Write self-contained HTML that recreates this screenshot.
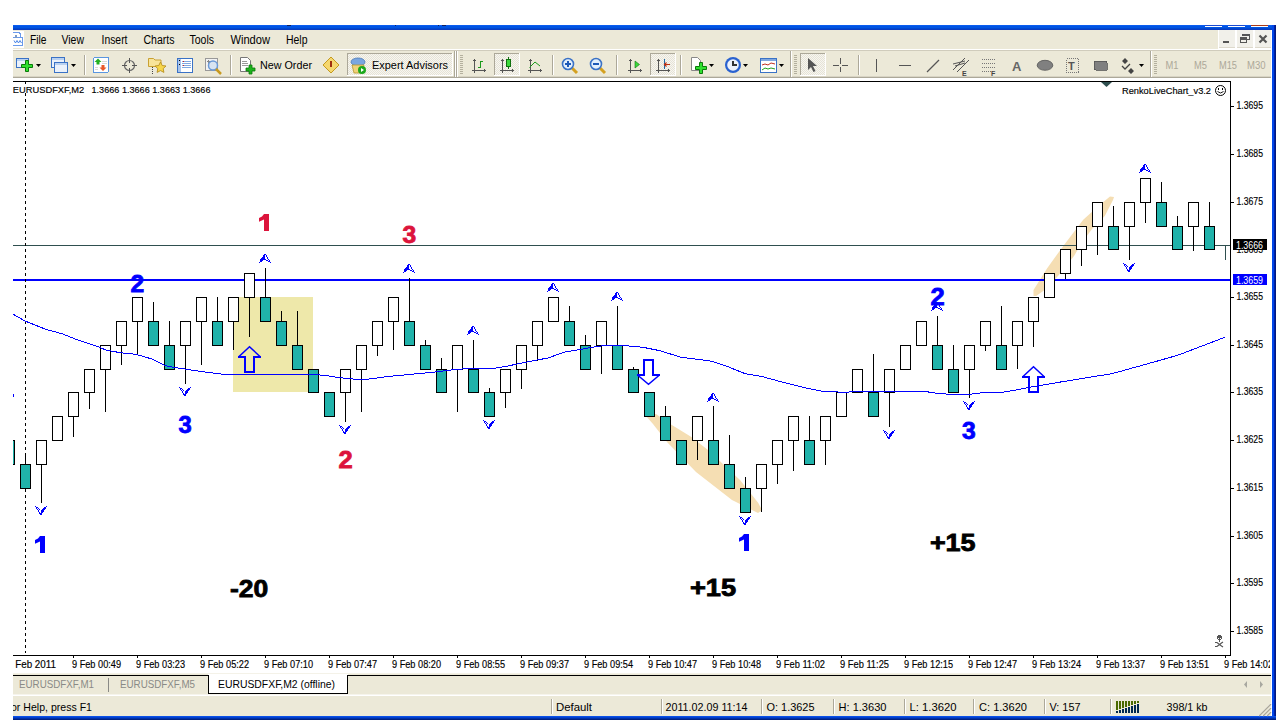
<!DOCTYPE html><html><head><meta charset="utf-8"><style>
html,body{margin:0;padding:0;background:#fff;width:1276px;height:720px;overflow:hidden}
svg{display:block}
text{font-family:"Liberation Sans", sans-serif} .ct{fill:#000;stroke:#000;stroke-width:0.15}
</style></head><body>
<svg width="1276" height="720" viewBox="0 0 1276 720" shape-rendering="crispEdges">
<rect x="0" y="0" width="1276" height="720" fill="#fff"/>

<rect x="13" y="25" width="1263" height="5" fill="#0054E3"/><rect x="13" y="25" width="1263" height="1" fill="#0A5CF0"/><rect x="13" y="28" width="1263" height="1" fill="#0048D0"/><rect x="13" y="29" width="1263" height="1" fill="#0A3CC0"/>
<rect x="287" y="25" width="4" height="1" fill="#102060"/><rect x="395" y="25" width="1" height="1" fill="#102060"/><rect x="438" y="25" width="1" height="1" fill="#102060"/><rect x="442" y="25" width="4" height="1" fill="#102060"/>
<rect x="1205" y="25" width="17" height="1" fill="#1A4AD0"/><rect x="1228" y="25" width="17" height="1" fill="#1A4AD0"/><rect x="1251" y="25" width="17" height="1" fill="#A83A18"/>
<rect x="1205" y="26" width="17" height="1" fill="#fff"/><rect x="1228" y="26" width="17" height="1" fill="#fff"/><rect x="1251" y="26" width="17" height="1" fill="#fff"/>
<rect x="1272" y="25" width="4" height="695" fill="#0046E8"/><rect x="1274" y="25" width="2" height="695" fill="#0020A8"/><rect x="1275" y="25" width="1" height="695" fill="#001A80"/>
<rect x="13" y="30" width="1258" height="20" fill="#ECE9D8"/>
<rect x="13" y="49" width="1258" height="1" fill="#fff"/>
<rect x="13" y="50" width="1258" height="1" fill="#D0CCBC"/>
<rect x="13" y="31" width="11" height="17" fill="#fff"/><path d="M13,32.5 h6 l1.5,1.5 v3.5 M13,37.5 h9.5 v7.5 h-9.5" stroke="#6A9AEA" stroke-width="1" fill="none"/><path d="M14,40.5 l1.5,2.5 l1.5,-2.5 l1.5,2.5 l1.5,-2.5 l1.5,2.5" stroke="#4A86E8" stroke-width="1" fill="none" shape-rendering="auto"/><rect x="15" y="35" width="2" height="3" fill="#7A9AC8"/>
<text x="30" y="44" font-size="12" fill="#000" textLength="16.5" lengthAdjust="spacingAndGlyphs">File</text>
<text x="61.5" y="44" font-size="12" fill="#000" textLength="22.5" lengthAdjust="spacingAndGlyphs">View</text>
<text x="101.5" y="44" font-size="12" fill="#000" textLength="26" lengthAdjust="spacingAndGlyphs">Insert</text>
<text x="143.5" y="44" font-size="12" fill="#000" textLength="31" lengthAdjust="spacingAndGlyphs">Charts</text>
<text x="189.5" y="44" font-size="12" fill="#000" textLength="24.5" lengthAdjust="spacingAndGlyphs">Tools</text>
<text x="230.5" y="44" font-size="12" fill="#000" textLength="39.5" lengthAdjust="spacingAndGlyphs">Window</text>
<text x="286" y="44" font-size="12" fill="#000" textLength="21.5" lengthAdjust="spacingAndGlyphs">Help</text>
<rect x="1218" y="30" width="53" height="19" fill="#fff"/>
<rect x="1219" y="30" width="16" height="18" fill="#F1F0EA"/><rect x="1219" y="47" width="16" height="1" fill="#DDD9CC"/>
<rect x="1237" y="30" width="16" height="18" fill="#F1F0EA"/><rect x="1237" y="47" width="16" height="1" fill="#DDD9CC"/>
<rect x="1255" y="30" width="16" height="18" fill="#F1F0EA"/><rect x="1255" y="47" width="16" height="1" fill="#DDD9CC"/>
<rect x="1223" y="41" width="6" height="2" fill="#555"/>
<path d="M1240.5,39.5 h6 v3 h-6 z M1243,36 v-1.5 h6 v5 h-2" stroke="#555" stroke-width="1" fill="none"/><rect x="1240" y="37" width="7" height="2" fill="#555"/><rect x="1242" y="34" width="7" height="2" fill="#555"/>
<path d="M1259.5,35.5 l7,7 M1266.5,35.5 l-7,7" stroke="#555" stroke-width="2.2" shape-rendering="auto"/>
<rect x="13" y="51" width="1258" height="27" fill="#ECE9D8"/>
<rect x="13" y="77" width="1258" height="1" fill="#ACA899"/><rect x="13" y="76" width="1258" height="1" fill="#D8D4C4"/>
<rect x="13" y="78" width="1258" height="3" fill="#fff"/>
<defs><pattern id="chk" x="0" y="0" width="2" height="2" patternUnits="userSpaceOnUse"><rect width="2" height="2" fill="#F7F6F1"/><rect width="1" height="1" fill="#E6E3D6"/><rect x="1" y="1" width="1" height="1" fill="#E6E3D6"/></pattern></defs>
<rect x="16.5" y="58.5" width="12" height="9" fill="#EAF1FB" stroke="#3A72C6"/><rect x="17" y="59" width="11" height="2" fill="#B9D1F0"/>
<path d="M21.5,64.5 h4 v-4 h3 v4 h4 v3 h-4 v4 h-3 v-4 h-4 z" fill="#2FE02F" stroke="#0A7A0A" stroke-width="1" shape-rendering="auto"/>
<path d="M36,64 h5 l-2.5,3 z" fill="#000" shape-rendering="auto"/>
<rect x="51.5" y="57.5" width="13" height="10" fill="#EAF1FB" stroke="#3A72C6"/><rect x="52" y="58" width="12" height="2" fill="#B9D1F0"/>
<rect x="54.5" y="62.5" width="13" height="10" fill="#EAF1FB" stroke="#3A72C6"/><rect x="55" y="63" width="12" height="2" fill="#B9D1F0"/>
<path d="M71,64 h5 l-2.5,3 z" fill="#000" shape-rendering="auto"/>
<rect x="84" y="55" width="1" height="20" fill="#ACA899"/><rect x="85" y="55" width="1" height="20" fill="#fff"/>
<rect x="93.5" y="57.5" width="15" height="15" rx="1.5" fill="#fff" stroke="#5A96E0"/><path d="M102,61 h5 M102,63 h5 M95,67 h3 M95,69 h3" stroke="#D8D8D8"/><path d="M98,58.5 l3.5,3.5 h-2 v2.5 h-3 v-2.5 h-2z" fill="#22B022" shape-rendering="auto"/><path d="M101.5,65 h3 v2.5 h2 l-3.5,3.5 l-3.5,-3.5 h2z" fill="#E8582A" shape-rendering="auto"/>
<circle cx="129.5" cy="65.5" r="5" fill="none" stroke="#666" stroke-width="1.2" shape-rendering="auto"/><path d="M129.5,58 v5 M129.5,68 v5 M122,65.5 h5 M132,65.5 h5" stroke="#555" stroke-width="1.2"/>
<path d="M148.5,58.5 h5 l1.5,1.5 h6 v6.5 h-12.5 z" fill="#F8E49A" stroke="#C9A133" stroke-width="1" shape-rendering="auto"/><path d="M152.5,67 v7" stroke="#444" stroke-dasharray="1,1"/><path d="M160.5,62 l1.7,3.5 l3.8,.5 l-2.8,2.6 l.7,3.8 l-3.4,-1.8 l-3.4,1.8 l.7,-3.8 l-2.8,-2.6 l3.8,-.5z" fill="#F7D64A" stroke="#B8901F" stroke-width="0.9" shape-rendering="auto"/>
<rect x="177.5" y="58.5" width="15" height="14" rx="1" fill="#fff" stroke="#3A72C6" stroke-width="1.2"/><rect x="178" y="59" width="3" height="13" fill="#A8C4EC"/><path d="M182,61.5 h9 M182,63.5 h9 M182,65.5 h9 M182,67.5 h9" stroke="#7FA7E0"/><rect x="179" y="60" width="1" height="1" fill="#000"/><rect x="179" y="64" width="1" height="1" fill="#000"/><rect x="183" y="61" width="1" height="1" fill="#D02020"/><rect x="183" y="65" width="1" height="1" fill="#D02020"/>
<rect x="205.5" y="58.5" width="12" height="12" fill="#F2F2F2" stroke="#999"/><path d="M208,60 v6 M207,61 h8" stroke="#888"/><circle cx="213" cy="65.5" r="4.5" fill="#D8E4F2" stroke="#6A9AD8" stroke-width="1.5" shape-rendering="auto"/><path d="M216,69 l5,5" stroke="#C89A20" stroke-width="2.5" shape-rendering="auto"/>
<rect x="230" y="55" width="1" height="20" fill="#ACA899"/><rect x="231" y="55" width="1" height="20" fill="#fff"/>
<path d="M240.5,57.5 h7 l3,3 v11 h-10 z" fill="#fff" stroke="#777" shape-rendering="auto"/><path d="M242,61 h5 M242,63 h6 M242,65 h6" stroke="#999"/>
<path d="M246,68 h3 v-3 h3 v3 h3 v3 h-3 v3 h-3 v-3 h-3 z" fill="#1DB31D" stroke="#0A7A0A" stroke-width="0.8" shape-rendering="auto"/>
<text x="260" y="69" font-size="11" fill="#000" textLength="52" lengthAdjust="spacingAndGlyphs">New Order</text>
<path d="M331,57 l8,8 l-8,8 l-8,-8z" fill="#F5D76E" stroke="#C49A1E" stroke-width="1" shape-rendering="auto"/><path d="M331,61 v6" stroke="#A03010" stroke-width="1.5"/>
<rect x="347" y="53" width="106" height="23" fill="url(#chk)"/><rect x="347" y="53" width="105" height="1" fill="#ACA899"/><rect x="347" y="53" width="1" height="22" fill="#ACA899"/><rect x="452" y="53" width="1" height="23" fill="#fff"/><rect x="347" y="75" width="106" height="1" fill="#fff"/>
<ellipse cx="358" cy="62" rx="7" ry="4" fill="#7AA6E0" stroke="#4A78B8" stroke-width="0.8" shape-rendering="auto"/><path d="M352,65 h12 l-2,8 h-8z" fill="#F0D27A" stroke="#B8952A" stroke-width="0.8" shape-rendering="auto"/><circle cx="362" cy="70" r="4" fill="#1CA81C" shape-rendering="auto"/><path d="M361,68 l3,2 l-3,2z" fill="#fff" shape-rendering="auto"/>
<text x="372" y="69" font-size="11" fill="#000" textLength="76" lengthAdjust="spacingAndGlyphs">Expert Advisors</text>
<rect x="454" y="51" width="1" height="26" fill="#ACA899"/><rect x="455" y="51" width="1" height="26" fill="#fff"/>
<rect x="456" y="51" width="1" height="26" fill="#ACA899"/><rect x="457" y="51" width="1" height="26" fill="#fff"/>
<rect x="460" y="55" width="3" height="1" fill="#B4B09E"/>
<rect x="460" y="57" width="3" height="1" fill="#B4B09E"/>
<rect x="460" y="59" width="3" height="1" fill="#B4B09E"/>
<rect x="460" y="61" width="3" height="1" fill="#B4B09E"/>
<rect x="460" y="63" width="3" height="1" fill="#B4B09E"/>
<rect x="460" y="65" width="3" height="1" fill="#B4B09E"/>
<rect x="460" y="67" width="3" height="1" fill="#B4B09E"/>
<rect x="460" y="69" width="3" height="1" fill="#B4B09E"/>
<rect x="460" y="71" width="3" height="1" fill="#B4B09E"/>
<rect x="460" y="73" width="3" height="1" fill="#B4B09E"/>
<rect x="474" y="59" width="1" height="14" fill="#555"/><rect x="473" y="60" width="3" height="1" fill="#555"/><rect x="472" y="70" width="14" height="1" fill="#555"/><rect x="484" y="69" width="1" height="3" fill="#555"/>
<path d="M478,67.5 h2.5 v-6 h2.5" stroke="#1A9A1A" stroke-width="1" fill="none"/>
<rect x="494" y="53" width="26" height="23" fill="url(#chk)"/><rect x="494" y="53" width="25" height="1" fill="#ACA899"/><rect x="494" y="53" width="1" height="22" fill="#ACA899"/><rect x="519" y="53" width="1" height="23" fill="#fff"/><rect x="494" y="75" width="26" height="1" fill="#fff"/>
<rect x="502" y="59" width="1" height="14" fill="#555"/><rect x="501" y="60" width="3" height="1" fill="#555"/><rect x="500" y="70" width="14" height="1" fill="#555"/><rect x="512" y="69" width="1" height="3" fill="#555"/>
<rect x="508" y="57" width="1" height="12" fill="#107010"/><rect x="506.5" y="59.5" width="4" height="7" fill="#3AD83A" stroke="#107010"/>
<rect x="530" y="59" width="1" height="14" fill="#555"/><rect x="529" y="60" width="3" height="1" fill="#555"/><rect x="528" y="70" width="14" height="1" fill="#555"/><rect x="540" y="69" width="1" height="3" fill="#555"/>
<path d="M529.5,67.5 l5.5,-5.5 l5,4" stroke="#1A9A1A" stroke-width="1" fill="none" shape-rendering="auto"/>
<rect x="552" y="55" width="1" height="20" fill="#ACA899"/><rect x="553" y="55" width="1" height="20" fill="#fff"/>
<path d="M572,68 l5,5" stroke="#D4A020" stroke-width="3" shape-rendering="auto"/><circle cx="568" cy="64" r="5.5" fill="#E4F0FC" stroke="#3A72C6" stroke-width="1.6" shape-rendering="auto"/>
<path d="M565,64 h6" stroke="#1E5AB8" stroke-width="1.8"/>
<path d="M568,61 v6" stroke="#1E5AB8" stroke-width="1.8"/>
<path d="M600,68 l5,5" stroke="#D4A020" stroke-width="3" shape-rendering="auto"/><circle cx="596" cy="64" r="5.5" fill="#E4F0FC" stroke="#3A72C6" stroke-width="1.6" shape-rendering="auto"/>
<path d="M593,64 h6" stroke="#1E5AB8" stroke-width="1.8"/>
<rect x="616" y="55" width="1" height="20" fill="#ACA899"/><rect x="617" y="55" width="1" height="20" fill="#fff"/>
<rect x="630" y="59" width="1" height="14" fill="#555"/><rect x="629" y="60" width="3" height="1" fill="#555"/><rect x="628" y="70" width="14" height="1" fill="#555"/><rect x="640" y="69" width="1" height="3" fill="#555"/>
<path d="M635,61 l4.5,3.5 l-4.5,3.5z" fill="#3AD83A" stroke="#107010" stroke-width="0.6" shape-rendering="auto"/>
<rect x="650" y="53" width="26" height="23" fill="url(#chk)"/><rect x="650" y="53" width="25" height="1" fill="#ACA899"/><rect x="650" y="53" width="1" height="22" fill="#ACA899"/><rect x="675" y="53" width="1" height="23" fill="#fff"/><rect x="650" y="75" width="26" height="1" fill="#fff"/>
<rect x="658" y="59" width="1" height="14" fill="#555"/><rect x="657" y="60" width="3" height="1" fill="#555"/><rect x="656" y="70" width="14" height="1" fill="#555"/><rect x="668" y="69" width="1" height="3" fill="#555"/>
<rect x="664" y="59" width="1" height="10" fill="#1E6AA8"/><path d="M670,64.5 h-5 M666.5,62.5 l-2,2 l2,2" stroke="#C03010" stroke-width="1.2" fill="none" shape-rendering="auto"/>
<rect x="680" y="55" width="1" height="20" fill="#ACA899"/><rect x="681" y="55" width="1" height="20" fill="#fff"/>
<path d="M691.5,57.5 h6 l3,3 v10 h-9 z" fill="#fff" stroke="#888" shape-rendering="auto"/><path d="M695.5,66.5 h4 v-4 h3 v4 h4 v3 h-4 v4 h-3 v-4 h-4 z" fill="#2FE02F" stroke="#0A7A0A" stroke-width="1" shape-rendering="auto"/>
<path d="M709,64 h5 l-2.5,3 z" fill="#000" shape-rendering="auto"/>
<circle cx="733" cy="65" r="8" fill="#2A62D0" shape-rendering="auto"/><circle cx="733" cy="65" r="5.8" fill="#EEF2FA" shape-rendering="auto"/><path d="M733,60.5 v4.5 h3.5" stroke="#333" stroke-width="1.2" fill="none"/>
<path d="M743,64 h5 l-2.5,3 z" fill="#000" shape-rendering="auto"/>
<rect x="760.5" y="58.5" width="16" height="14" fill="#fff" stroke="#3A72C6"/><rect x="761" y="59" width="15" height="2" fill="#7FA7E0"/><path d="M762,65 l3,-1 l3,1 l3,-2 l4,1" stroke="#C03020" fill="none" shape-rendering="auto"/><path d="M762,70 l3,-2 l3,1 l3,-1 l4,1" stroke="#20A020" fill="none" shape-rendering="auto"/>
<path d="M779,64 h5 l-2.5,3 z" fill="#000" shape-rendering="auto"/>
<rect x="790" y="51" width="1" height="26" fill="#ACA899"/><rect x="791" y="51" width="1" height="26" fill="#fff"/>
<rect x="794" y="55" width="3" height="1" fill="#B4B09E"/>
<rect x="794" y="57" width="3" height="1" fill="#B4B09E"/>
<rect x="794" y="59" width="3" height="1" fill="#B4B09E"/>
<rect x="794" y="61" width="3" height="1" fill="#B4B09E"/>
<rect x="794" y="63" width="3" height="1" fill="#B4B09E"/>
<rect x="794" y="65" width="3" height="1" fill="#B4B09E"/>
<rect x="794" y="67" width="3" height="1" fill="#B4B09E"/>
<rect x="794" y="69" width="3" height="1" fill="#B4B09E"/>
<rect x="794" y="71" width="3" height="1" fill="#B4B09E"/>
<rect x="794" y="73" width="3" height="1" fill="#B4B09E"/>
<rect x="800" y="53" width="26" height="23" fill="url(#chk)"/><rect x="800" y="53" width="25" height="1" fill="#ACA899"/><rect x="800" y="53" width="1" height="22" fill="#ACA899"/><rect x="825" y="53" width="1" height="23" fill="#fff"/><rect x="800" y="75" width="26" height="1" fill="#fff"/>
<path d="M808,58 v12 l3,-3 l2.5,5 l2,-1 l-2.5,-5 h4z" fill="#555" shape-rendering="auto"/>
<path d="M840.5,58 v14 M833,65.5 h15" stroke="#555" stroke-width="1"/><rect x="839" y="64" width="3" height="3" fill="#ECE9D8"/>
<rect x="858" y="55" width="1" height="20" fill="#ACA899"/><rect x="859" y="55" width="1" height="20" fill="#fff"/>
<rect x="876" y="59" width="1" height="13" fill="#555"/>
<rect x="899" y="65" width="12" height="1" fill="#555"/>
<path d="M927,72 l12,-12" stroke="#555" stroke-width="1.2" shape-rendering="auto"/>
<path d="M953,70 l12,-12 M955,66 l10,-3 M957,72 l12,-12 M953,64 l12,-3" stroke="#555" stroke-width="1" fill="none" shape-rendering="auto"/><text x="962" y="76" font-size="7" font-weight="bold" fill="#444">E</text>
<path d="M982,59 h14 M982,63 h14 M982,67 h14 M982,71 h10" stroke="#777" stroke-dasharray="1,1"/><text x="991" y="76" font-size="7" font-weight="bold" fill="#444">F</text>
<text x="1012" y="71" font-size="13" font-weight="bold" fill="#666">A</text>
<ellipse cx="1045" cy="65.3" rx="7.8" ry="5" fill="#808080" stroke="#555" stroke-width="0.8" shape-rendering="auto"/>
<rect x="1066.5" y="58.5" width="12" height="14" fill="none" stroke="#777" stroke-dasharray="1,1"/><text x="1068" y="70" font-size="11" font-weight="bold" fill="#555">T</text>
<rect x="1094" y="61" width="13" height="9" rx="1.5" fill="#808080" stroke="#555" stroke-width="0.8"/>
<path d="M1122,61 l3,-3 l3,3 l-3,3z M1128,71 l3,-3 l3,3 l-3,3z" fill="#444" shape-rendering="auto"/><path d="M1122,66 l3,3 l5,-5" stroke="#444" stroke-width="1.3" fill="none" shape-rendering="auto"/>
<path d="M1139,64 h5 l-2.5,3 z" fill="#000" shape-rendering="auto"/>
<rect x="1150" y="51" width="1" height="26" fill="#ACA899"/><rect x="1151" y="51" width="1" height="26" fill="#fff"/>
<rect x="1154" y="55" width="3" height="1" fill="#B4B09E"/>
<rect x="1154" y="57" width="3" height="1" fill="#B4B09E"/>
<rect x="1154" y="59" width="3" height="1" fill="#B4B09E"/>
<rect x="1154" y="61" width="3" height="1" fill="#B4B09E"/>
<rect x="1154" y="63" width="3" height="1" fill="#B4B09E"/>
<rect x="1154" y="65" width="3" height="1" fill="#B4B09E"/>
<rect x="1154" y="67" width="3" height="1" fill="#B4B09E"/>
<rect x="1154" y="69" width="3" height="1" fill="#B4B09E"/>
<rect x="1154" y="71" width="3" height="1" fill="#B4B09E"/>
<rect x="1154" y="73" width="3" height="1" fill="#B4B09E"/>
<text x="1165.5" y="69" font-size="10" fill="#ACA899" textLength="13" lengthAdjust="spacingAndGlyphs">M1</text>
<text x="1194" y="69" font-size="10" fill="#ACA899" textLength="13" lengthAdjust="spacingAndGlyphs">M5</text>
<text x="1219" y="69" font-size="10" fill="#ACA899" textLength="18" lengthAdjust="spacingAndGlyphs">M15</text>
<text x="1247" y="69" font-size="10" fill="#ACA899" textLength="18.5" lengthAdjust="spacingAndGlyphs">M30</text>
<rect x="13" y="81" width="1258" height="595" fill="#fff"/>
<defs><clipPath id="cc"><rect x="13" y="82" width="1217" height="573"/></clipPath></defs>
<g clip-path="url(#cc)">
<rect x="233" y="297" width="80" height="95" fill="#EEE8AA"/>
<path d="M656,414 L671,424.4 L691,436.7 L708,450 L740,480 L758.3,503 L762,510 L758,513 L732,500 L696,472 L667,442 L653,424 L646,416 Z" fill="#F5DEB3" shape-rendering="auto"/>
<path d="M1033.5,296 L1033.5,290 L1047,268.4 L1063.3,245.9 L1083.2,219.7 L1099.4,205.3 L1110,196.5 L1114,197 L1113,200 L1104.8,216.1 L1092.2,228.7 L1081.4,243.2 L1074.2,255.8 L1059.7,273.9 L1047,288.3 L1036.2,296 Z" fill="#F5DEB3" shape-rendering="auto"/>
<rect x="13" y="245" width="1217" height="1" fill="#2F4F4F"/>
<rect x="13" y="279" width="1217" height="2" fill="#0000FF"/>
<path d="M25.5,93 V653" stroke="#000" stroke-width="1" stroke-dasharray="3,3"/>
<rect x="4.5" y="440.5" width="10" height="24" fill="#20B2AA" stroke="#000" stroke-width="1"/>
<rect x="25" y="453" width="1" height="11" fill="#000"/>
<rect x="20.5" y="464.5" width="10" height="24" fill="#20B2AA" stroke="#000" stroke-width="1"/>
<rect x="41" y="464" width="1" height="39" fill="#000"/>
<rect x="36.5" y="440.5" width="10" height="24" fill="#fff" stroke="#000" stroke-width="1"/>
<rect x="52.5" y="416.5" width="10" height="24" fill="#fff" stroke="#000" stroke-width="1"/>
<rect x="73" y="416" width="1" height="21" fill="#000"/>
<rect x="68.5" y="392.5" width="10" height="24" fill="#fff" stroke="#000" stroke-width="1"/>
<rect x="89" y="392" width="1" height="17" fill="#000"/>
<rect x="84.5" y="369.5" width="10" height="23" fill="#fff" stroke="#000" stroke-width="1"/>
<rect x="105" y="369" width="1" height="43" fill="#000"/>
<rect x="100.5" y="345.5" width="10" height="24" fill="#fff" stroke="#000" stroke-width="1"/>
<rect x="121" y="345" width="1" height="20" fill="#000"/>
<rect x="116.5" y="321.5" width="10" height="24" fill="#fff" stroke="#000" stroke-width="1"/>
<rect x="137" y="321" width="1" height="34" fill="#000"/>
<rect x="132.5" y="297.5" width="10" height="24" fill="#fff" stroke="#000" stroke-width="1"/>
<rect x="153" y="302" width="1" height="19" fill="#000"/>
<rect x="148.5" y="321.5" width="10" height="24" fill="#20B2AA" stroke="#000" stroke-width="1"/>
<rect x="169" y="321" width="1" height="24" fill="#000"/>
<rect x="164.5" y="345.5" width="10" height="24" fill="#20B2AA" stroke="#000" stroke-width="1"/>
<rect x="185" y="345" width="1" height="39" fill="#000"/>
<rect x="180.5" y="321.5" width="10" height="24" fill="#fff" stroke="#000" stroke-width="1"/>
<rect x="201" y="321" width="1" height="44" fill="#000"/>
<rect x="196.5" y="297.5" width="10" height="24" fill="#fff" stroke="#000" stroke-width="1"/>
<rect x="217" y="297" width="1" height="24" fill="#000"/>
<rect x="212.5" y="321.5" width="10" height="24" fill="#20B2AA" stroke="#000" stroke-width="1"/>
<rect x="233" y="321" width="1" height="29" fill="#000"/>
<rect x="228.5" y="297.5" width="10" height="24" fill="#fff" stroke="#000" stroke-width="1"/>
<rect x="249" y="297" width="1" height="40" fill="#000"/>
<rect x="244.5" y="273.5" width="10" height="24" fill="#fff" stroke="#000" stroke-width="1"/>
<rect x="265" y="268" width="1" height="29" fill="#000"/>
<rect x="260.5" y="297.5" width="10" height="24" fill="#20B2AA" stroke="#000" stroke-width="1"/>
<rect x="281" y="311" width="1" height="10" fill="#000"/>
<rect x="276.5" y="321.5" width="10" height="24" fill="#20B2AA" stroke="#000" stroke-width="1"/>
<rect x="297" y="311" width="1" height="34" fill="#000"/>
<rect x="292.5" y="345.5" width="10" height="24" fill="#20B2AA" stroke="#000" stroke-width="1"/>
<rect x="308.5" y="369.5" width="10" height="23" fill="#20B2AA" stroke="#000" stroke-width="1"/>
<rect x="324.5" y="392.5" width="10" height="24" fill="#20B2AA" stroke="#000" stroke-width="1"/>
<rect x="345" y="392" width="1" height="30" fill="#000"/>
<rect x="340.5" y="369.5" width="10" height="23" fill="#fff" stroke="#000" stroke-width="1"/>
<rect x="361" y="369" width="1" height="43" fill="#000"/>
<rect x="356.5" y="345.5" width="10" height="24" fill="#fff" stroke="#000" stroke-width="1"/>
<rect x="377" y="345" width="1" height="11" fill="#000"/>
<rect x="372.5" y="321.5" width="10" height="24" fill="#fff" stroke="#000" stroke-width="1"/>
<rect x="393" y="321" width="1" height="29" fill="#000"/>
<rect x="388.5" y="297.5" width="10" height="24" fill="#fff" stroke="#000" stroke-width="1"/>
<rect x="409" y="278" width="1" height="43" fill="#000"/>
<rect x="404.5" y="321.5" width="10" height="24" fill="#20B2AA" stroke="#000" stroke-width="1"/>
<rect x="425" y="340" width="1" height="5" fill="#000"/>
<rect x="420.5" y="345.5" width="10" height="24" fill="#20B2AA" stroke="#000" stroke-width="1"/>
<rect x="441" y="358" width="1" height="11" fill="#000"/>
<rect x="436.5" y="369.5" width="10" height="23" fill="#20B2AA" stroke="#000" stroke-width="1"/>
<rect x="457" y="369" width="1" height="43" fill="#000"/>
<rect x="452.5" y="345.5" width="10" height="24" fill="#fff" stroke="#000" stroke-width="1"/>
<rect x="473" y="340" width="1" height="29" fill="#000"/>
<rect x="468.5" y="369.5" width="10" height="23" fill="#20B2AA" stroke="#000" stroke-width="1"/>
<rect x="489" y="388" width="1" height="4" fill="#000"/>
<rect x="484.5" y="392.5" width="10" height="24" fill="#20B2AA" stroke="#000" stroke-width="1"/>
<rect x="505" y="392" width="1" height="16" fill="#000"/>
<rect x="500.5" y="369.5" width="10" height="23" fill="#fff" stroke="#000" stroke-width="1"/>
<rect x="521" y="369" width="1" height="20" fill="#000"/>
<rect x="516.5" y="345.5" width="10" height="24" fill="#fff" stroke="#000" stroke-width="1"/>
<rect x="537" y="345" width="1" height="16" fill="#000"/>
<rect x="532.5" y="321.5" width="10" height="24" fill="#fff" stroke="#000" stroke-width="1"/>
<rect x="548.5" y="297.5" width="10" height="24" fill="#fff" stroke="#000" stroke-width="1"/>
<rect x="569" y="306" width="1" height="15" fill="#000"/>
<rect x="564.5" y="321.5" width="10" height="24" fill="#20B2AA" stroke="#000" stroke-width="1"/>
<rect x="585" y="335" width="1" height="10" fill="#000"/>
<rect x="580.5" y="345.5" width="10" height="24" fill="#20B2AA" stroke="#000" stroke-width="1"/>
<rect x="601" y="345" width="1" height="29" fill="#000"/>
<rect x="596.5" y="321.5" width="10" height="24" fill="#fff" stroke="#000" stroke-width="1"/>
<rect x="617" y="306" width="1" height="39" fill="#000"/>
<rect x="612.5" y="345.5" width="10" height="24" fill="#20B2AA" stroke="#000" stroke-width="1"/>
<rect x="633" y="367" width="1" height="2" fill="#000"/>
<rect x="628.5" y="369.5" width="10" height="23" fill="#20B2AA" stroke="#000" stroke-width="1"/>
<rect x="644.5" y="392.5" width="10" height="24" fill="#20B2AA" stroke="#000" stroke-width="1"/>
<rect x="665" y="406" width="1" height="10" fill="#000"/>
<rect x="660.5" y="416.5" width="10" height="24" fill="#20B2AA" stroke="#000" stroke-width="1"/>
<rect x="676.5" y="440.5" width="10" height="24" fill="#20B2AA" stroke="#000" stroke-width="1"/>
<rect x="697" y="440" width="1" height="20" fill="#000"/>
<rect x="692.5" y="416.5" width="10" height="24" fill="#fff" stroke="#000" stroke-width="1"/>
<rect x="713" y="406" width="1" height="34" fill="#000"/>
<rect x="708.5" y="440.5" width="10" height="24" fill="#20B2AA" stroke="#000" stroke-width="1"/>
<rect x="729" y="435" width="1" height="29" fill="#000"/>
<rect x="724.5" y="464.5" width="10" height="24" fill="#20B2AA" stroke="#000" stroke-width="1"/>
<rect x="745" y="477" width="1" height="11" fill="#000"/>
<rect x="740.5" y="488.5" width="10" height="24" fill="#20B2AA" stroke="#000" stroke-width="1"/>
<rect x="761" y="488" width="1" height="24" fill="#000"/>
<rect x="756.5" y="464.5" width="10" height="24" fill="#fff" stroke="#000" stroke-width="1"/>
<rect x="777" y="464" width="1" height="20" fill="#000"/>
<rect x="772.5" y="440.5" width="10" height="24" fill="#fff" stroke="#000" stroke-width="1"/>
<rect x="793" y="440" width="1" height="31" fill="#000"/>
<rect x="788.5" y="416.5" width="10" height="24" fill="#fff" stroke="#000" stroke-width="1"/>
<rect x="809" y="416" width="1" height="24" fill="#000"/>
<rect x="804.5" y="440.5" width="10" height="24" fill="#20B2AA" stroke="#000" stroke-width="1"/>
<rect x="825" y="440" width="1" height="25" fill="#000"/>
<rect x="820.5" y="416.5" width="10" height="24" fill="#fff" stroke="#000" stroke-width="1"/>
<rect x="836.5" y="392.5" width="10" height="24" fill="#fff" stroke="#000" stroke-width="1"/>
<rect x="852.5" y="369.5" width="10" height="23" fill="#fff" stroke="#000" stroke-width="1"/>
<rect x="873" y="354" width="1" height="38" fill="#000"/>
<rect x="868.5" y="392.5" width="10" height="24" fill="#20B2AA" stroke="#000" stroke-width="1"/>
<rect x="889" y="392" width="1" height="35" fill="#000"/>
<rect x="884.5" y="369.5" width="10" height="23" fill="#fff" stroke="#000" stroke-width="1"/>
<rect x="900.5" y="345.5" width="10" height="24" fill="#fff" stroke="#000" stroke-width="1"/>
<rect x="916.5" y="321.5" width="10" height="24" fill="#fff" stroke="#000" stroke-width="1"/>
<rect x="937" y="316" width="1" height="29" fill="#000"/>
<rect x="932.5" y="345.5" width="10" height="24" fill="#20B2AA" stroke="#000" stroke-width="1"/>
<rect x="953" y="345" width="1" height="24" fill="#000"/>
<rect x="948.5" y="369.5" width="10" height="23" fill="#20B2AA" stroke="#000" stroke-width="1"/>
<rect x="969" y="369" width="1" height="29" fill="#000"/>
<rect x="964.5" y="345.5" width="10" height="24" fill="#fff" stroke="#000" stroke-width="1"/>
<rect x="985" y="345" width="1" height="6" fill="#000"/>
<rect x="980.5" y="321.5" width="10" height="24" fill="#fff" stroke="#000" stroke-width="1"/>
<rect x="1001" y="306" width="1" height="39" fill="#000"/>
<rect x="996.5" y="345.5" width="10" height="24" fill="#20B2AA" stroke="#000" stroke-width="1"/>
<rect x="1017" y="345" width="1" height="24" fill="#000"/>
<rect x="1012.5" y="321.5" width="10" height="24" fill="#fff" stroke="#000" stroke-width="1"/>
<rect x="1033" y="321" width="1" height="26" fill="#000"/>
<rect x="1028.5" y="297.5" width="10" height="24" fill="#fff" stroke="#000" stroke-width="1"/>
<rect x="1044.5" y="273.5" width="10" height="24" fill="#fff" stroke="#000" stroke-width="1"/>
<rect x="1065" y="273" width="1" height="6" fill="#000"/>
<rect x="1060.5" y="249.5" width="10" height="24" fill="#fff" stroke="#000" stroke-width="1"/>
<rect x="1081" y="249" width="1" height="17" fill="#000"/>
<rect x="1076.5" y="226.5" width="10" height="23" fill="#fff" stroke="#000" stroke-width="1"/>
<rect x="1097" y="226" width="1" height="29" fill="#000"/>
<rect x="1092.5" y="202.5" width="10" height="24" fill="#fff" stroke="#000" stroke-width="1"/>
<rect x="1113" y="206" width="1" height="20" fill="#000"/>
<rect x="1108.5" y="226.5" width="10" height="23" fill="#20B2AA" stroke="#000" stroke-width="1"/>
<rect x="1129" y="226" width="1" height="34" fill="#000"/>
<rect x="1124.5" y="202.5" width="10" height="24" fill="#fff" stroke="#000" stroke-width="1"/>
<rect x="1145" y="202" width="1" height="21" fill="#000"/>
<rect x="1140.5" y="178.5" width="10" height="24" fill="#fff" stroke="#000" stroke-width="1"/>
<rect x="1161" y="182" width="1" height="20" fill="#000"/>
<rect x="1156.5" y="202.5" width="10" height="24" fill="#20B2AA" stroke="#000" stroke-width="1"/>
<rect x="1177" y="216" width="1" height="10" fill="#000"/>
<rect x="1172.5" y="226.5" width="10" height="23" fill="#20B2AA" stroke="#000" stroke-width="1"/>
<rect x="1193" y="226" width="1" height="25" fill="#000"/>
<rect x="1188.5" y="202.5" width="10" height="24" fill="#fff" stroke="#000" stroke-width="1"/>
<rect x="1209" y="202" width="1" height="24" fill="#000"/>
<rect x="1204.5" y="226.5" width="10" height="23" fill="#20B2AA" stroke="#000" stroke-width="1"/>
<rect x="1225" y="245" width="1" height="15" fill="#2F4F4F"/>
<rect x="13" y="394" width="1" height="3" fill="#0000FF"/>
<polyline points="13,314.1 25.3,321.1 45.9,329.4 62.4,333.8 78.8,340.4 100.2,347.5 105.2,349.8 120,352.7 136.4,354.4 152.9,359.3 166,365.9 177.6,367.9 202.3,371.7 223,374.2 240.3,375 241.1,374.2 308.6,374.2 325,375.4 338.2,377.5 354.7,379.2 367.8,379.2 387.6,376.5 412.3,374.2 433,372.3 449.5,370.2 465.9,368.6 480.7,368.6 490.6,369 507.1,366.1 531.7,361.1 548.2,357.9 564.7,352.1 581.1,349.3 597.6,346.3 610.8,345 623.9,345.5 643,347.3 659.5,350.6 680.9,357.2 697.3,359.3 712.1,361.3 728.6,367 745,373.6 761.5,376.4 782.9,382.3 807.6,388.4 824,391.7 847,392.2 853,391.5 925.4,391.5 935.3,393.1 946.8,394.1 971.5,394.1 981.4,392.8 1004.4,392 1014.3,390.3 1030.7,387 1050.5,383.7 1063,381.6 1112.3,373.6 1146.9,364 1177.6,355.3 1224.9,337.3" fill="none" stroke="#0000FF" stroke-width="1" shape-rendering="crispEdges"/>
<path d="M264,254h1v1h-1zM265,254h1v1h-1zM263,255h1v1h-1zM264,255h1v1h-1zM266,255h1v1h-1zM263,256h1v1h-1zM264,256h1v1h-1zM266,256h1v1h-1zM262,257h1v1h-1zM263,257h1v1h-1zM264,257h1v1h-1zM267,257h1v1h-1zM261,258h1v1h-1zM262,258h1v1h-1zM263,258h1v1h-1zM264,258h1v1h-1zM267,258h1v1h-1zM260,259h1v1h-1zM261,259h1v1h-1zM262,259h1v1h-1zM263,259h1v1h-1zM264,259h1v1h-1zM265,259h1v1h-1zM268,259h1v1h-1zM260,260h1v1h-1zM261,260h1v1h-1zM262,260h1v1h-1zM266,260h1v1h-1zM267,260h1v1h-1zM269,260h1v1h-1zM260,261h1v1h-1zM261,261h1v1h-1zM268,261h1v1h-1zM269,261h1v1h-1zM259,262h1v1h-1zM270,262h1v1h-1z" fill="#0000FF"/>
<path d="M408,264h1v1h-1zM409,264h1v1h-1zM407,265h1v1h-1zM408,265h1v1h-1zM410,265h1v1h-1zM407,266h1v1h-1zM408,266h1v1h-1zM410,266h1v1h-1zM406,267h1v1h-1zM407,267h1v1h-1zM408,267h1v1h-1zM411,267h1v1h-1zM405,268h1v1h-1zM406,268h1v1h-1zM407,268h1v1h-1zM408,268h1v1h-1zM411,268h1v1h-1zM404,269h1v1h-1zM405,269h1v1h-1zM406,269h1v1h-1zM407,269h1v1h-1zM408,269h1v1h-1zM409,269h1v1h-1zM412,269h1v1h-1zM404,270h1v1h-1zM405,270h1v1h-1zM406,270h1v1h-1zM410,270h1v1h-1zM411,270h1v1h-1zM413,270h1v1h-1zM404,271h1v1h-1zM405,271h1v1h-1zM412,271h1v1h-1zM413,271h1v1h-1zM403,272h1v1h-1zM414,272h1v1h-1z" fill="#0000FF"/>
<path d="M472,326h1v1h-1zM473,326h1v1h-1zM471,327h1v1h-1zM472,327h1v1h-1zM474,327h1v1h-1zM471,328h1v1h-1zM472,328h1v1h-1zM474,328h1v1h-1zM470,329h1v1h-1zM471,329h1v1h-1zM472,329h1v1h-1zM475,329h1v1h-1zM469,330h1v1h-1zM470,330h1v1h-1zM471,330h1v1h-1zM472,330h1v1h-1zM475,330h1v1h-1zM468,331h1v1h-1zM469,331h1v1h-1zM470,331h1v1h-1zM471,331h1v1h-1zM472,331h1v1h-1zM473,331h1v1h-1zM476,331h1v1h-1zM468,332h1v1h-1zM469,332h1v1h-1zM470,332h1v1h-1zM474,332h1v1h-1zM475,332h1v1h-1zM477,332h1v1h-1zM468,333h1v1h-1zM469,333h1v1h-1zM476,333h1v1h-1zM477,333h1v1h-1zM467,334h1v1h-1zM478,334h1v1h-1z" fill="#0000FF"/>
<path d="M552,283h1v1h-1zM553,283h1v1h-1zM551,284h1v1h-1zM552,284h1v1h-1zM554,284h1v1h-1zM551,285h1v1h-1zM552,285h1v1h-1zM554,285h1v1h-1zM550,286h1v1h-1zM551,286h1v1h-1zM552,286h1v1h-1zM555,286h1v1h-1zM549,287h1v1h-1zM550,287h1v1h-1zM551,287h1v1h-1zM552,287h1v1h-1zM555,287h1v1h-1zM548,288h1v1h-1zM549,288h1v1h-1zM550,288h1v1h-1zM551,288h1v1h-1zM552,288h1v1h-1zM553,288h1v1h-1zM556,288h1v1h-1zM548,289h1v1h-1zM549,289h1v1h-1zM550,289h1v1h-1zM554,289h1v1h-1zM555,289h1v1h-1zM557,289h1v1h-1zM548,290h1v1h-1zM549,290h1v1h-1zM556,290h1v1h-1zM557,290h1v1h-1zM547,291h1v1h-1zM558,291h1v1h-1z" fill="#0000FF"/>
<path d="M616,292h1v1h-1zM617,292h1v1h-1zM615,293h1v1h-1zM616,293h1v1h-1zM618,293h1v1h-1zM615,294h1v1h-1zM616,294h1v1h-1zM618,294h1v1h-1zM614,295h1v1h-1zM615,295h1v1h-1zM616,295h1v1h-1zM619,295h1v1h-1zM613,296h1v1h-1zM614,296h1v1h-1zM615,296h1v1h-1zM616,296h1v1h-1zM619,296h1v1h-1zM612,297h1v1h-1zM613,297h1v1h-1zM614,297h1v1h-1zM615,297h1v1h-1zM616,297h1v1h-1zM617,297h1v1h-1zM620,297h1v1h-1zM612,298h1v1h-1zM613,298h1v1h-1zM614,298h1v1h-1zM618,298h1v1h-1zM619,298h1v1h-1zM621,298h1v1h-1zM612,299h1v1h-1zM613,299h1v1h-1zM620,299h1v1h-1zM621,299h1v1h-1zM611,300h1v1h-1zM622,300h1v1h-1z" fill="#0000FF"/>
<path d="M712,393h1v1h-1zM713,393h1v1h-1zM711,394h1v1h-1zM712,394h1v1h-1zM714,394h1v1h-1zM711,395h1v1h-1zM712,395h1v1h-1zM714,395h1v1h-1zM710,396h1v1h-1zM711,396h1v1h-1zM712,396h1v1h-1zM715,396h1v1h-1zM709,397h1v1h-1zM710,397h1v1h-1zM711,397h1v1h-1zM712,397h1v1h-1zM715,397h1v1h-1zM708,398h1v1h-1zM709,398h1v1h-1zM710,398h1v1h-1zM711,398h1v1h-1zM712,398h1v1h-1zM713,398h1v1h-1zM716,398h1v1h-1zM708,399h1v1h-1zM709,399h1v1h-1zM710,399h1v1h-1zM714,399h1v1h-1zM715,399h1v1h-1zM717,399h1v1h-1zM708,400h1v1h-1zM709,400h1v1h-1zM716,400h1v1h-1zM717,400h1v1h-1zM707,401h1v1h-1zM718,401h1v1h-1z" fill="#0000FF"/>
<path d="M936,302h1v1h-1zM937,302h1v1h-1zM935,303h1v1h-1zM936,303h1v1h-1zM938,303h1v1h-1zM935,304h1v1h-1zM936,304h1v1h-1zM938,304h1v1h-1zM934,305h1v1h-1zM935,305h1v1h-1zM936,305h1v1h-1zM939,305h1v1h-1zM933,306h1v1h-1zM934,306h1v1h-1zM935,306h1v1h-1zM936,306h1v1h-1zM939,306h1v1h-1zM932,307h1v1h-1zM933,307h1v1h-1zM934,307h1v1h-1zM935,307h1v1h-1zM936,307h1v1h-1zM937,307h1v1h-1zM940,307h1v1h-1zM932,308h1v1h-1zM933,308h1v1h-1zM934,308h1v1h-1zM938,308h1v1h-1zM939,308h1v1h-1zM941,308h1v1h-1zM932,309h1v1h-1zM933,309h1v1h-1zM940,309h1v1h-1zM941,309h1v1h-1zM931,310h1v1h-1zM942,310h1v1h-1z" fill="#0000FF"/>
<path d="M1144,164h1v1h-1zM1145,164h1v1h-1zM1143,165h1v1h-1zM1144,165h1v1h-1zM1146,165h1v1h-1zM1143,166h1v1h-1zM1144,166h1v1h-1zM1146,166h1v1h-1zM1142,167h1v1h-1zM1143,167h1v1h-1zM1144,167h1v1h-1zM1147,167h1v1h-1zM1141,168h1v1h-1zM1142,168h1v1h-1zM1143,168h1v1h-1zM1144,168h1v1h-1zM1147,168h1v1h-1zM1140,169h1v1h-1zM1141,169h1v1h-1zM1142,169h1v1h-1zM1143,169h1v1h-1zM1144,169h1v1h-1zM1145,169h1v1h-1zM1148,169h1v1h-1zM1140,170h1v1h-1zM1141,170h1v1h-1zM1142,170h1v1h-1zM1146,170h1v1h-1zM1147,170h1v1h-1zM1149,170h1v1h-1zM1140,171h1v1h-1zM1141,171h1v1h-1zM1148,171h1v1h-1zM1149,171h1v1h-1zM1139,172h1v1h-1zM1150,172h1v1h-1z" fill="#0000FF"/>
<path d="M35,506h1v1h-1zM46,506h1v1h-1zM36,507h1v1h-1zM37,507h1v1h-1zM44,507h1v1h-1zM45,507h1v1h-1zM36,508h1v1h-1zM38,508h1v1h-1zM43,508h1v1h-1zM44,508h1v1h-1zM45,508h1v1h-1zM37,509h1v1h-1zM39,509h1v1h-1zM42,509h1v1h-1zM43,509h1v1h-1zM44,509h1v1h-1zM38,510h1v1h-1zM41,510h1v1h-1zM42,510h1v1h-1zM43,510h1v1h-1zM38,511h1v1h-1zM41,511h1v1h-1zM42,511h1v1h-1zM43,511h1v1h-1zM39,512h1v1h-1zM41,512h1v1h-1zM42,512h1v1h-1zM39,513h1v1h-1zM40,513h1v1h-1zM41,513h1v1h-1zM40,514h1v1h-1zM41,514h1v1h-1z" fill="#0000FF"/>
<path d="M179,387h1v1h-1zM190,387h1v1h-1zM180,388h1v1h-1zM181,388h1v1h-1zM188,388h1v1h-1zM189,388h1v1h-1zM180,389h1v1h-1zM182,389h1v1h-1zM187,389h1v1h-1zM188,389h1v1h-1zM189,389h1v1h-1zM181,390h1v1h-1zM183,390h1v1h-1zM186,390h1v1h-1zM187,390h1v1h-1zM188,390h1v1h-1zM182,391h1v1h-1zM185,391h1v1h-1zM186,391h1v1h-1zM187,391h1v1h-1zM182,392h1v1h-1zM185,392h1v1h-1zM186,392h1v1h-1zM187,392h1v1h-1zM183,393h1v1h-1zM185,393h1v1h-1zM186,393h1v1h-1zM183,394h1v1h-1zM184,394h1v1h-1zM185,394h1v1h-1zM184,395h1v1h-1zM185,395h1v1h-1z" fill="#0000FF"/>
<path d="M339,425h1v1h-1zM350,425h1v1h-1zM340,426h1v1h-1zM341,426h1v1h-1zM348,426h1v1h-1zM349,426h1v1h-1zM340,427h1v1h-1zM342,427h1v1h-1zM347,427h1v1h-1zM348,427h1v1h-1zM349,427h1v1h-1zM341,428h1v1h-1zM343,428h1v1h-1zM346,428h1v1h-1zM347,428h1v1h-1zM348,428h1v1h-1zM342,429h1v1h-1zM345,429h1v1h-1zM346,429h1v1h-1zM347,429h1v1h-1zM342,430h1v1h-1zM345,430h1v1h-1zM346,430h1v1h-1zM347,430h1v1h-1zM343,431h1v1h-1zM345,431h1v1h-1zM346,431h1v1h-1zM343,432h1v1h-1zM344,432h1v1h-1zM345,432h1v1h-1zM344,433h1v1h-1zM345,433h1v1h-1z" fill="#0000FF"/>
<path d="M483,420h1v1h-1zM494,420h1v1h-1zM484,421h1v1h-1zM485,421h1v1h-1zM492,421h1v1h-1zM493,421h1v1h-1zM484,422h1v1h-1zM486,422h1v1h-1zM491,422h1v1h-1zM492,422h1v1h-1zM493,422h1v1h-1zM485,423h1v1h-1zM487,423h1v1h-1zM490,423h1v1h-1zM491,423h1v1h-1zM492,423h1v1h-1zM486,424h1v1h-1zM489,424h1v1h-1zM490,424h1v1h-1zM491,424h1v1h-1zM486,425h1v1h-1zM489,425h1v1h-1zM490,425h1v1h-1zM491,425h1v1h-1zM487,426h1v1h-1zM489,426h1v1h-1zM490,426h1v1h-1zM487,427h1v1h-1zM488,427h1v1h-1zM489,427h1v1h-1zM488,428h1v1h-1zM489,428h1v1h-1z" fill="#0000FF"/>
<path d="M739,516h1v1h-1zM750,516h1v1h-1zM740,517h1v1h-1zM741,517h1v1h-1zM748,517h1v1h-1zM749,517h1v1h-1zM740,518h1v1h-1zM742,518h1v1h-1zM747,518h1v1h-1zM748,518h1v1h-1zM749,518h1v1h-1zM741,519h1v1h-1zM743,519h1v1h-1zM746,519h1v1h-1zM747,519h1v1h-1zM748,519h1v1h-1zM742,520h1v1h-1zM745,520h1v1h-1zM746,520h1v1h-1zM747,520h1v1h-1zM742,521h1v1h-1zM745,521h1v1h-1zM746,521h1v1h-1zM747,521h1v1h-1zM743,522h1v1h-1zM745,522h1v1h-1zM746,522h1v1h-1zM743,523h1v1h-1zM744,523h1v1h-1zM745,523h1v1h-1zM744,524h1v1h-1zM745,524h1v1h-1z" fill="#0000FF"/>
<path d="M883,430h1v1h-1zM894,430h1v1h-1zM884,431h1v1h-1zM885,431h1v1h-1zM892,431h1v1h-1zM893,431h1v1h-1zM884,432h1v1h-1zM886,432h1v1h-1zM891,432h1v1h-1zM892,432h1v1h-1zM893,432h1v1h-1zM885,433h1v1h-1zM887,433h1v1h-1zM890,433h1v1h-1zM891,433h1v1h-1zM892,433h1v1h-1zM886,434h1v1h-1zM889,434h1v1h-1zM890,434h1v1h-1zM891,434h1v1h-1zM886,435h1v1h-1zM889,435h1v1h-1zM890,435h1v1h-1zM891,435h1v1h-1zM887,436h1v1h-1zM889,436h1v1h-1zM890,436h1v1h-1zM887,437h1v1h-1zM888,437h1v1h-1zM889,437h1v1h-1zM888,438h1v1h-1zM889,438h1v1h-1z" fill="#0000FF"/>
<path d="M963,401h1v1h-1zM974,401h1v1h-1zM964,402h1v1h-1zM965,402h1v1h-1zM972,402h1v1h-1zM973,402h1v1h-1zM964,403h1v1h-1zM966,403h1v1h-1zM971,403h1v1h-1zM972,403h1v1h-1zM973,403h1v1h-1zM965,404h1v1h-1zM967,404h1v1h-1zM970,404h1v1h-1zM971,404h1v1h-1zM972,404h1v1h-1zM966,405h1v1h-1zM969,405h1v1h-1zM970,405h1v1h-1zM971,405h1v1h-1zM966,406h1v1h-1zM969,406h1v1h-1zM970,406h1v1h-1zM971,406h1v1h-1zM967,407h1v1h-1zM969,407h1v1h-1zM970,407h1v1h-1zM967,408h1v1h-1zM968,408h1v1h-1zM969,408h1v1h-1zM968,409h1v1h-1zM969,409h1v1h-1z" fill="#0000FF"/>
<path d="M1123,263h1v1h-1zM1134,263h1v1h-1zM1124,264h1v1h-1zM1125,264h1v1h-1zM1132,264h1v1h-1zM1133,264h1v1h-1zM1124,265h1v1h-1zM1126,265h1v1h-1zM1131,265h1v1h-1zM1132,265h1v1h-1zM1133,265h1v1h-1zM1125,266h1v1h-1zM1127,266h1v1h-1zM1130,266h1v1h-1zM1131,266h1v1h-1zM1132,266h1v1h-1zM1126,267h1v1h-1zM1129,267h1v1h-1zM1130,267h1v1h-1zM1131,267h1v1h-1zM1126,268h1v1h-1zM1129,268h1v1h-1zM1130,268h1v1h-1zM1131,268h1v1h-1zM1127,269h1v1h-1zM1129,269h1v1h-1zM1130,269h1v1h-1zM1127,270h1v1h-1zM1128,270h1v1h-1zM1129,270h1v1h-1zM1128,271h1v1h-1zM1129,271h1v1h-1z" fill="#0000FF"/>
<rect x="244.0" y="356" width="2" height="17" fill="#0000FF"/><rect x="253.0" y="356" width="2" height="17" fill="#0000FF"/>
<rect x="244.0" y="371" width="11" height="2" fill="#0000FF"/>
<rect x="238.0" y="356" width="8" height="2" fill="#0000FF"/><rect x="253.0" y="356" width="8" height="2" fill="#0000FF"/>
<path d="M238.5,357 L249.5,346.7 L260.5,357" stroke="#0000FF" stroke-width="1.5" fill="none" shape-rendering="auto"/>
<rect x="643.0" y="359" width="2" height="17" fill="#0000FF"/><rect x="652.0" y="359" width="2" height="17" fill="#0000FF"/>
<rect x="643.0" y="359" width="11" height="2" fill="#0000FF"/>
<rect x="637.0" y="374" width="8" height="2" fill="#0000FF"/><rect x="652.0" y="374" width="8" height="2" fill="#0000FF"/>
<path d="M637.5,375 L648.5,384.3 L659.5,375" stroke="#0000FF" stroke-width="1.5" fill="none" shape-rendering="auto"/>
<rect x="1028.0" y="376" width="2" height="17" fill="#0000FF"/><rect x="1037.0" y="376" width="2" height="17" fill="#0000FF"/>
<rect x="1028.0" y="391" width="11" height="2" fill="#0000FF"/>
<rect x="1022.0" y="376" width="8" height="2" fill="#0000FF"/><rect x="1037.0" y="376" width="8" height="2" fill="#0000FF"/>
<path d="M1022.5,377 L1033.5,366.7 L1044.5,377" stroke="#0000FF" stroke-width="1.5" fill="none" shape-rendering="auto"/>
<path d="M264,214 h5 v17 h-5 v-11.5 l-5,2.2 v-3.7 l3,-1.5 z" fill="#DC143C" shape-rendering="auto"/>
<text x="402.4" y="242.6" font-size="23" font-weight="bold" fill="#DC143C" stroke="#DC143C" stroke-width="0.8" textLength="13.7" lengthAdjust="spacingAndGlyphs">3</text>
<text x="338.4" y="467.6" font-size="23" font-weight="bold" fill="#DC143C" stroke="#DC143C" stroke-width="0.8" textLength="14.2" lengthAdjust="spacingAndGlyphs">2</text>
<text x="130.4" y="291.6" font-size="23" font-weight="bold" fill="#0000FF" stroke="#0000FF" stroke-width="0.8" textLength="13.7" lengthAdjust="spacingAndGlyphs">2</text>
<text x="178.4" y="432.6" font-size="23" font-weight="bold" fill="#0000FF" stroke="#0000FF" stroke-width="0.8" textLength="13.2" lengthAdjust="spacingAndGlyphs">3</text>
<path d="M40,536 h5 v17 h-5 v-11.5 l-5,2.2 v-3.7 l3,-1.5 z" fill="#0000FF" shape-rendering="auto"/>
<path d="M744,534 h5 v17 h-5 v-11.5 l-5,2.2 v-3.7 l3,-1.5 z" fill="#0000FF" shape-rendering="auto"/>
<text x="930.4" y="304.6" font-size="23" font-weight="bold" fill="#0000FF" stroke="#0000FF" stroke-width="0.8" textLength="14.2" lengthAdjust="spacingAndGlyphs">2</text>
<text x="961.9" y="438.6" font-size="23" font-weight="bold" fill="#0000FF" stroke="#0000FF" stroke-width="0.8" textLength="13.7" lengthAdjust="spacingAndGlyphs">3</text>
<text x="229.9" y="596.6" font-size="23" font-weight="bold" fill="#000" stroke="#000" stroke-width="0.8" textLength="38.2" lengthAdjust="spacingAndGlyphs">-20</text>
<text x="689.9" y="595.6" font-size="23" font-weight="bold" fill="#000" stroke="#000" stroke-width="0.8" textLength="46.2" lengthAdjust="spacingAndGlyphs">+15</text>
<text x="929.9" y="550.6" font-size="23" font-weight="bold" fill="#000" stroke="#000" stroke-width="0.8" textLength="45.7" lengthAdjust="spacingAndGlyphs">+15</text>
<text class="ct" x="12.8" y="92.5" font-size="9.6" textLength="71.5" lengthAdjust="spacingAndGlyphs">EURUSDFXF,M2</text>
<text class="ct" x="91.5" y="92.5" font-size="9.6" textLength="119" lengthAdjust="spacingAndGlyphs">1.3666 1.3666 1.3663 1.3666</text>
<path d="M1101,82 h11 l-5.5,5z" fill="#2F4F4F" shape-rendering="auto"/>
<text class="ct" x="1122" y="94" font-size="9.6" textLength="89" lengthAdjust="spacingAndGlyphs">RenkoLiveChart_v3.2</text>
<circle cx="1220.5" cy="90.5" r="5" fill="none" stroke="#000" stroke-width="1" shape-rendering="auto"/><circle cx="1218.5" cy="89" r="0.6" fill="#000"/><circle cx="1222.5" cy="89" r="0.6" fill="#000"/><path d="M1217.5,91.5 q3,3 6,0" stroke="#000" fill="none" stroke-width="0.9" shape-rendering="auto"/>
<path d="M1218,635h3v1h1v3h-1v1h-3v-1h-1v-3h1z" fill="#555"/><rect x="1218" y="638" width="1" height="1" fill="#fff"/><rect x="1220" y="638" width="1" height="1" fill="#fff"/><rect x="1219" y="640" width="1" height="2" fill="#555"/>
<path d="M1215,642.5 h2 l2.5,2 l2,-1.5 l1.5,-1 M1215,646.5 h2 l2.5,-2 l2,1.5 l1.5,1" stroke="#555" stroke-width="1.2" fill="none" shape-rendering="auto"/>
</g>
<rect x="13" y="81" width="1218" height="1" fill="#000"/>
<rect x="13" y="655" width="1218" height="1" fill="#000"/>
<rect x="1230" y="81" width="1" height="575" fill="#000"/>
<rect x="25" y="82" width="1" height="2" fill="#000"/>
<rect x="1231" y="106" width="3" height="1" fill="#000"/>
<text class="ct" x="1236.5" y="109" font-size="10" textLength="26.5" lengthAdjust="spacingAndGlyphs">1.3695</text>
<rect x="1231" y="154" width="3" height="1" fill="#000"/>
<text class="ct" x="1236.5" y="157" font-size="10" textLength="26.5" lengthAdjust="spacingAndGlyphs">1.3685</text>
<rect x="1231" y="202" width="3" height="1" fill="#000"/>
<text class="ct" x="1236.5" y="205" font-size="10" textLength="26.5" lengthAdjust="spacingAndGlyphs">1.3675</text>
<rect x="1231" y="297" width="3" height="1" fill="#000"/>
<text class="ct" x="1236.5" y="300" font-size="10" textLength="26.5" lengthAdjust="spacingAndGlyphs">1.3655</text>
<rect x="1231" y="345" width="3" height="1" fill="#000"/>
<text class="ct" x="1236.5" y="348" font-size="10" textLength="26.5" lengthAdjust="spacingAndGlyphs">1.3645</text>
<rect x="1231" y="392" width="3" height="1" fill="#000"/>
<text class="ct" x="1236.5" y="395" font-size="10" textLength="26.5" lengthAdjust="spacingAndGlyphs">1.3635</text>
<rect x="1231" y="440" width="3" height="1" fill="#000"/>
<text class="ct" x="1236.5" y="443" font-size="10" textLength="26.5" lengthAdjust="spacingAndGlyphs">1.3625</text>
<rect x="1231" y="488" width="3" height="1" fill="#000"/>
<text class="ct" x="1236.5" y="491" font-size="10" textLength="26.5" lengthAdjust="spacingAndGlyphs">1.3615</text>
<rect x="1231" y="536" width="3" height="1" fill="#000"/>
<text class="ct" x="1236.5" y="539" font-size="10" textLength="26.5" lengthAdjust="spacingAndGlyphs">1.3605</text>
<rect x="1231" y="583" width="3" height="1" fill="#000"/>
<text class="ct" x="1236.5" y="586" font-size="10" textLength="26.5" lengthAdjust="spacingAndGlyphs">1.3595</text>
<rect x="1231" y="631" width="3" height="1" fill="#000"/>
<text class="ct" x="1236.5" y="634" font-size="10" textLength="26.5" lengthAdjust="spacingAndGlyphs">1.3585</text>
<text class="ct" x="1236.5" y="252.6" font-size="10" textLength="26.5" lengthAdjust="spacingAndGlyphs">1.3665</text><rect x="1233" y="239" width="34" height="11" fill="#000"/><text x="1236" y="248.5" font-size="10" fill="#fff" textLength="27" lengthAdjust="spacingAndGlyphs">1.3666</text>
<rect x="1233" y="274" width="34" height="11" fill="#0000FF"/><text x="1236" y="283.5" font-size="10" fill="#fff" textLength="27" lengthAdjust="spacingAndGlyphs">1.3659</text>
<defs><clipPath id="tc"><rect x="13" y="656" width="1257" height="17"/></clipPath></defs><g clip-path="url(#tc)">
<text class="ct" x="7" y="668" font-size="10" textLength="49" lengthAdjust="spacingAndGlyphs">9 Feb 2011</text>
<rect x="73" y="656" width="1" height="2" fill="#000"/>
<text class="ct" x="72" y="668" font-size="10" textLength="49" lengthAdjust="spacingAndGlyphs">9 Feb 00:49</text>
<rect x="137" y="656" width="1" height="2" fill="#000"/>
<text class="ct" x="136" y="668" font-size="10" textLength="49" lengthAdjust="spacingAndGlyphs">9 Feb 03:23</text>
<rect x="201" y="656" width="1" height="2" fill="#000"/>
<text class="ct" x="200" y="668" font-size="10" textLength="49" lengthAdjust="spacingAndGlyphs">9 Feb 05:22</text>
<rect x="265" y="656" width="1" height="2" fill="#000"/>
<text class="ct" x="264" y="668" font-size="10" textLength="49" lengthAdjust="spacingAndGlyphs">9 Feb 07:10</text>
<rect x="329" y="656" width="1" height="2" fill="#000"/>
<text class="ct" x="328" y="668" font-size="10" textLength="49" lengthAdjust="spacingAndGlyphs">9 Feb 07:47</text>
<rect x="393" y="656" width="1" height="2" fill="#000"/>
<text class="ct" x="392" y="668" font-size="10" textLength="49" lengthAdjust="spacingAndGlyphs">9 Feb 08:20</text>
<rect x="457" y="656" width="1" height="2" fill="#000"/>
<text class="ct" x="456" y="668" font-size="10" textLength="49" lengthAdjust="spacingAndGlyphs">9 Feb 08:55</text>
<rect x="521" y="656" width="1" height="2" fill="#000"/>
<text class="ct" x="520" y="668" font-size="10" textLength="49" lengthAdjust="spacingAndGlyphs">9 Feb 09:37</text>
<rect x="585" y="656" width="1" height="2" fill="#000"/>
<text class="ct" x="584" y="668" font-size="10" textLength="49" lengthAdjust="spacingAndGlyphs">9 Feb 09:54</text>
<rect x="649" y="656" width="1" height="2" fill="#000"/>
<text class="ct" x="648" y="668" font-size="10" textLength="49" lengthAdjust="spacingAndGlyphs">9 Feb 10:47</text>
<rect x="713" y="656" width="1" height="2" fill="#000"/>
<text class="ct" x="712" y="668" font-size="10" textLength="49" lengthAdjust="spacingAndGlyphs">9 Feb 10:48</text>
<rect x="777" y="656" width="1" height="2" fill="#000"/>
<text class="ct" x="776" y="668" font-size="10" textLength="49" lengthAdjust="spacingAndGlyphs">9 Feb 11:02</text>
<rect x="841" y="656" width="1" height="2" fill="#000"/>
<text class="ct" x="840" y="668" font-size="10" textLength="49" lengthAdjust="spacingAndGlyphs">9 Feb 11:25</text>
<rect x="905" y="656" width="1" height="2" fill="#000"/>
<text class="ct" x="904" y="668" font-size="10" textLength="49" lengthAdjust="spacingAndGlyphs">9 Feb 12:15</text>
<rect x="969" y="656" width="1" height="2" fill="#000"/>
<text class="ct" x="968" y="668" font-size="10" textLength="49" lengthAdjust="spacingAndGlyphs">9 Feb 12:47</text>
<rect x="1033" y="656" width="1" height="2" fill="#000"/>
<text class="ct" x="1032" y="668" font-size="10" textLength="49" lengthAdjust="spacingAndGlyphs">9 Feb 13:24</text>
<rect x="1097" y="656" width="1" height="2" fill="#000"/>
<text class="ct" x="1096" y="668" font-size="10" textLength="49" lengthAdjust="spacingAndGlyphs">9 Feb 13:37</text>
<rect x="1161" y="656" width="1" height="2" fill="#000"/>
<text class="ct" x="1160" y="668" font-size="10" textLength="49" lengthAdjust="spacingAndGlyphs">9 Feb 13:51</text>
<rect x="1225" y="656" width="1" height="2" fill="#000"/>
<text class="ct" x="1224" y="668" font-size="10" textLength="49" lengthAdjust="spacingAndGlyphs">9 Feb 14:02</text>
</g>
<rect x="13" y="673" width="1258" height="1" fill="#F4F2E8"/>
<rect x="13" y="674" width="1258" height="21" fill="#ECE9D8"/>
<rect x="13" y="675" width="1258" height="1" fill="#000"/>
<rect x="208" y="674" width="140" height="20" fill="#fff"/>
<rect x="208" y="675" width="1" height="19" fill="#000"/><rect x="347" y="675" width="1" height="19" fill="#000"/><rect x="208" y="693" width="140" height="1" fill="#000"/>
<rect x="13" y="694" width="1258" height="1" fill="#F6F4EC"/>
<text x="19" y="688" font-size="11" fill="#8A8A86" textLength="75" lengthAdjust="spacingAndGlyphs">EURUSDFXF,M1</text>
<rect x="108" y="678" width="1" height="14" fill="#8A8A86"/>
<text x="120" y="688" font-size="11" fill="#8A8A86" textLength="75" lengthAdjust="spacingAndGlyphs">EURUSDFXF,M5</text>
<text x="218" y="688" font-size="11" fill="#000" textLength="117" lengthAdjust="spacingAndGlyphs">EURUSDFXF,M2 (offline)</text>
<path d="M1247,681 v7 l-3,-3.5z M1260,681 v7 l3,-3.5z" fill="#A8A8A0" shape-rendering="auto"/>
<rect x="13" y="695" width="1258" height="21" fill="#ECE9D8"/><rect x="13" y="695" width="1258" height="1" fill="#fff"/>
<rect x="13" y="716" width="1263" height="1" fill="#0A50E8"/><rect x="13" y="717" width="1263" height="1" fill="#0040D0"/><rect x="13" y="718" width="1263" height="1" fill="#0030A8"/><rect x="13" y="719" width="1263" height="1" fill="#002080"/>
<defs><clipPath id="sc"><rect x="13" y="695" width="500" height="21"/></clipPath></defs><text clip-path="url(#sc)" x="11" y="711" font-size="11" fill="#000" textLength="81" lengthAdjust="spacingAndGlyphs">or Help, press F1</text>
<rect x="551" y="699" width="1" height="15" fill="#ACA899"/><rect x="552" y="699" width="1" height="15" fill="#fff"/>
<rect x="661" y="699" width="1" height="15" fill="#ACA899"/><rect x="662" y="699" width="1" height="15" fill="#fff"/>
<rect x="761" y="699" width="1" height="15" fill="#ACA899"/><rect x="762" y="699" width="1" height="15" fill="#fff"/>
<rect x="833" y="699" width="1" height="15" fill="#ACA899"/><rect x="834" y="699" width="1" height="15" fill="#fff"/>
<rect x="904" y="699" width="1" height="15" fill="#ACA899"/><rect x="905" y="699" width="1" height="15" fill="#fff"/>
<rect x="973" y="699" width="1" height="15" fill="#ACA899"/><rect x="974" y="699" width="1" height="15" fill="#fff"/>
<rect x="1044" y="699" width="1" height="15" fill="#ACA899"/><rect x="1045" y="699" width="1" height="15" fill="#fff"/>
<rect x="1110" y="699" width="1" height="15" fill="#ACA899"/><rect x="1111" y="699" width="1" height="15" fill="#fff"/>
<text x="556" y="711" font-size="11" fill="#000" textLength="36" lengthAdjust="spacingAndGlyphs">Default</text>
<text x="665.5" y="711" font-size="11" fill="#000" textLength="82" lengthAdjust="spacingAndGlyphs">2011.02.09 11:14</text>
<text x="766.5" y="711" font-size="11" fill="#000" textLength="48" lengthAdjust="spacingAndGlyphs">O: 1.3625</text>
<text x="838.5" y="711" font-size="11" fill="#000" textLength="48" lengthAdjust="spacingAndGlyphs">H: 1.3630</text>
<text x="909.5" y="711" font-size="11" fill="#000" textLength="47" lengthAdjust="spacingAndGlyphs">L: 1.3620</text>
<text x="979" y="711" font-size="11" fill="#000" textLength="48" lengthAdjust="spacingAndGlyphs">C: 1.3620</text>
<text x="1049.5" y="711" font-size="11" fill="#000" textLength="31" lengthAdjust="spacingAndGlyphs">V: 157</text>
<text x="1166.5" y="711" font-size="11" fill="#000" textLength="41" lengthAdjust="spacingAndGlyphs">398/1 kb</text>
<rect x="1116" y="701" width="2" height="9" fill="#4A6A00"/><rect x="1116" y="711" width="2" height="2" fill="#002850"/>
<rect x="1119" y="701" width="2" height="8" fill="#4A6A00"/><rect x="1119" y="710" width="2" height="3" fill="#002850"/>
<rect x="1122" y="701" width="2" height="7" fill="#4A6A00"/><rect x="1122" y="709" width="2" height="4" fill="#002850"/>
<rect x="1125" y="701" width="2" height="6" fill="#4A6A00"/><rect x="1125" y="708" width="2" height="5" fill="#002850"/>
<rect x="1128" y="701" width="2" height="5" fill="#4A6A00"/><rect x="1128" y="707" width="2" height="6" fill="#002850"/>
<rect x="1131" y="701" width="2" height="4" fill="#4A6A00"/><rect x="1131" y="706" width="2" height="7" fill="#002850"/>
<rect x="1134" y="701" width="2" height="3" fill="#4A6A00"/><rect x="1134" y="705" width="2" height="8" fill="#002850"/>
<rect x="1137" y="701" width="2" height="2" fill="#4A6A00"/><rect x="1137" y="704" width="2" height="9" fill="#002850"/>
<path d="M1258,716 l13,-13 M1262,716 l9,-9 M1266,716 l5,-5" stroke="#fff" stroke-width="1" shape-rendering="auto"/><path d="M1259,716 l12,-12 M1263,716 l8,-8 M1267,716 l4,-4" stroke="#ACA899" stroke-width="1.4" shape-rendering="auto"/>
</svg></body></html>
